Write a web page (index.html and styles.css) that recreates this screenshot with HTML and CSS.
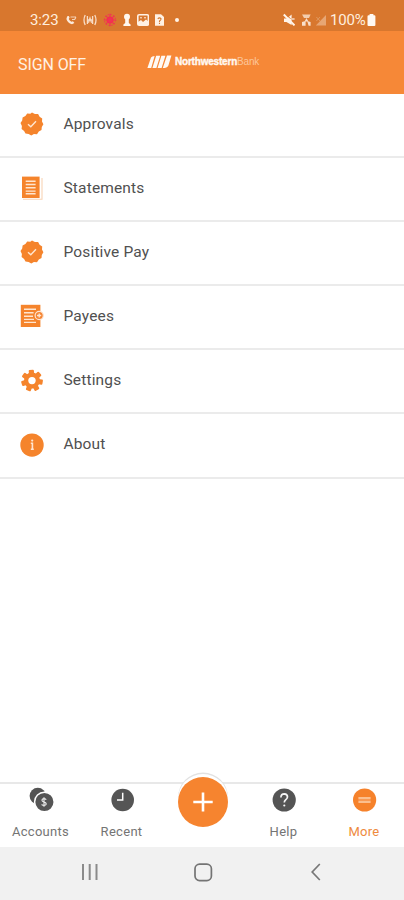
FILE: index.html
```html
<!DOCTYPE html>
<html lang="en">
<head>
<meta charset="utf-8">
<meta name="viewport" content="width=device-width, initial-scale=1">
<title>Northwestern Bank</title>
<link rel="stylesheet" href="styles.css">
</head>
<body>
<div class="app">
  <div class="status">
    <div class="status-left">
      <span class="time">3:23</span>
      <svg width="12" height="14" viewBox="0 0 12 14"><path d="M2.2 3.2 L1.4 6 Q2.4 10 7 11.2 L9.4 10 L8 8.2 L6.4 8.8 Q4.4 7.8 3.8 6 L4.6 4.6 L3.8 3Z" fill="#fbe9db"/><path d="M5.5 4 H11 M7 6.5 H9.6 L11 4.2" stroke="#f5d2b5" stroke-width="1.2" fill="none"/></svg>
      <svg width="14" height="14" viewBox="0 0 14 14"><path d="M2.2 2 Q-.2 7 2.2 12 M4.4 3 V11 M11.8 2 Q14.2 7 11.8 12 M9.6 3 V11 M4.5 7 H9.5 M5.5 9.6 L7 5 L8.5 9.6" stroke="#f8dcc5" stroke-width="1.3" fill="none"/></svg>
      <svg width="14" height="14" viewBox="0 0 14 14"><circle cx="7" cy="7" r="3.6" fill="#fa2850"/><path d="M7 .8 V13.2 M.8 7 H13.2 M2.6 2.6 L11.4 11.4 M2.6 11.4 L11.4 2.6" stroke="#f03553" stroke-width="1.2"/><circle cx="7" cy="7" r="5.6" fill="none" stroke="#f03553" stroke-width="1" stroke-dasharray="1.4 1.5"/></svg>
      <svg width="8" height="14" viewBox="0 0 8 14"><circle cx="4" cy="3.8" r="3" fill="#fff7ef"/><path d="M2.2 5 H5.8 V10 L7.6 11.4 V13 H.4 V11.4 L2.2 10Z" fill="#fff7ef"/></svg>
      <svg width="12" height="14" viewBox="0 0 12 14"><rect x=".8" y="1.8" width="10.6" height="10.4" rx="1.3" fill="none" stroke="#fff1e4" stroke-width="1.6"/><path d="M1 12 V9 L4 7 L6 9 L9 6.6 L11.4 8.6 V12Z" fill="#fff1e4"/><path d="M3 4.8 H5 M7 4.8 H9" stroke="#fff1e4"/></svg>
      <svg width="9" height="14" viewBox="0 0 9 14"><path d="M0 1.3 H6 L9 4 V12.8 H0Z" fill="#fff1e4"/><path d="M2.8 5.8 Q4.5 4 6.1 5.8 Q6 7.2 4.5 8 V9 M4.5 9.8 V11" stroke="#d4782f" stroke-width="1.1" fill="none"/></svg>
      <span class="dot"></span>
    </div>
    <div class="status-right">
      <svg class="mute" width="12" height="14" viewBox="0 0 12 14"><path d="M1 5.4 H4 L8.6 1.4 V12 L3.4 9 H1Z" fill="#fff4ea"/><path d="M9 6 H11.6" stroke="#fff4ea" stroke-width="1.2"/><path d="M.8 1.5 L11.5 12.4" stroke="#fff4ea" stroke-width="2"/><path d="M3 1.2 L7.5 5.8" stroke="#d8772e" stroke-width="1"/></svg>
      <svg class="wifi" width="9" height="14" viewBox="0 0 9 14"><path d="M0 1.6 H8.6 L7 5 H2Z" fill="#f3cdae"/><path d="M4.5 5 L6.4 8.5 H2.6Z M0 12.8 V9 L3.6 8 V12.8Z M5.2 8 L8.6 9 V12.8H6.6Z" fill="#f9dfca"/></svg>
      <svg class="signal" width="12" height="14" viewBox="0 0 12 14"><path d="M11 2 V12.6 H.8Z" fill="#e7a674"/><path d="M1.4 4 L5 8 M5 4 L1.4 8" stroke="#e09860"/></svg>
      <span class="percent">100%</span>
      <svg width="9" height="14" viewBox="0 0 9 14"><path d="M2.6 .9 H6.4 V2.2 H7.4 Q8.4 2.2 8.4 3.2 V12 Q8.4 13 7.4 13 H1.6 Q.5 13 .5 12 V3.2 Q.5 2.2 1.6 2.2 H2.6Z" fill="#fff9f3"/></svg>
    </div>
  </div>

  <header class="header">
    <span class="signoff">SIGN OFF</span>
    <div class="brand">
      <svg width="25" height="14" viewBox="0 0 25 14"><path d="M4 2.6 Q5 1 7.6 1 L4.2 13 H.4Z M9.2 .8 H13.2 L9.4 13 H5.4Z M14.4 .8 H18.4 L14.6 13 H10.6Z M20 .6 H24.4 L21.4 10.4 Q20 13 15.8 13Z" fill="#fffaf5"/></svg>
      <span class="brand-name"><b>Northwestern</b><span class="brand-bank">Bank</span></span>
    </div>
  </header>

  <main class="menu">
    <div class="row">
      <svg class="icon" viewBox="0 0 24 24"><path class="seal" d="M12 .5 L14.9 1.9 L18.1 2 L19.6 4.7 L22.2 6.5 L22 9.6 L23.4 12.3 L21.8 15 L21.5 18.1 L18.8 19.6 L17 22.2 L13.9 22 L11.3 23.5 L8.6 21.9 L5.5 21.6 L4.1 18.9 L1.6 17 L1.9 13.9 L.5 11.1 L2.2 8.5 L2.6 5.4 L5.4 4 L7.2 1.6 L10.3 1.8Z"/><path class="line" d="M8 12.2 L10.8 14.7 L16 9.3"/></svg>
      <span>Approvals</span>
    </div>
    <div class="row">
      <svg class="icon" viewBox="0 0 24 24"><path d="M3 23.2 H22 V2" fill="none" stroke="#f8d4b5" stroke-width="1.1"/><path class="fill" d="M2 .6 H19.6 V22 H2Z"/><path class="line" d="M5.7 5.2 H15.6 M5.7 8.5 H15.6 M5.7 11.8 H15.6 M5.7 15.1 H15.6 M5.7 17.8 H15.6"/></svg>
      <span>Statements</span>
    </div>
    <div class="row">
      <svg class="icon" viewBox="0 0 24 24"><path class="seal" d="M12 .5 L14.9 1.9 L18.1 2 L19.6 4.7 L22.2 6.5 L22 9.6 L23.4 12.3 L21.8 15 L21.5 18.1 L18.8 19.6 L17 22.2 L13.9 22 L11.3 23.5 L8.6 21.9 L5.5 21.6 L4.1 18.9 L1.6 17 L1.9 13.9 L.5 11.1 L2.2 8.5 L2.6 5.4 L5.4 4 L7.2 1.6 L10.3 1.8Z"/><path class="line" d="M8 12.2 L10.8 14.7 L16 9.3"/></svg>
      <span>Positive Pay</span>
    </div>
    <div class="row">
      <svg class="icon" viewBox="0 0 24 24"><path class="fill" d="M.8 .8 H20.4 V23 H.8Z"/><path class="line" d="M4 5.2 H16 M4 8.8 H13.6 M4 12.2 H13 M4 15.4 H14 M4 18.4 H16"/><circle cx="19.2" cy="11.5" r="4.1" fill="#f58432" stroke="#fde5d2" stroke-width="1.2"/><path class="line" d="M17 11.5 H21.2 M19.2 9.4 V13.6"/></svg>
      <span>Payees</span>
    </div>
    <div class="row">
      <svg class="icon" viewBox="0 0 24 24"><g class="fill" transform="rotate(-4 12 12.6)"><circle cx="12" cy="12.6" r="8"/><rect x="9.4" y="1.8" width="5.2" height="6" rx="1"/><rect x="9.4" y="1.8" width="5.2" height="6" rx="1" transform="rotate(51.43 12 12.6)"/><rect x="9.4" y="1.8" width="5.2" height="6" rx="1" transform="rotate(102.86 12 12.6)"/><rect x="9.4" y="1.8" width="5.2" height="6" rx="1" transform="rotate(154.29 12 12.6)"/><rect x="9.4" y="1.8" width="5.2" height="6" rx="1" transform="rotate(205.71 12 12.6)"/><rect x="9.4" y="1.8" width="5.2" height="6" rx="1" transform="rotate(257.14 12 12.6)"/><rect x="9.4" y="1.8" width="5.2" height="6" rx="1" transform="rotate(308.57 12 12.6)"/></g><circle cx="12" cy="12.6" r="3.7" fill="#fff"/></svg>
      <span>Settings</span>
    </div>
    <div class="row">
      <svg class="icon" viewBox="0 0 24 24"><circle class="fill" cx="12" cy="13.1" r="11.7"/><path d="M10.8 11.3 H12.4 V17.2 M10.8 17.2 H13.8" fill="none" stroke="#ffe6d2" stroke-width="1.6"/><circle cx="12.2" cy="8.6" r="1.1" fill="#ffe6d2"/></svg>
      <span>About</span>
    </div>
  </main>

  <nav class="tabs">
    <div class="tab">
      <svg width="26" height="26" viewBox="0 0 26 26"><circle cx="9.8" cy="9" r="8.2" fill="#545454"/><circle cx="16.4" cy="15" r="9.8" fill="#555" stroke="#fff" stroke-width="1.5"/><path d="M18.3 12.7 Q16 10.8 14.2 12.4 Q13.4 14.4 16 15 Q18.8 15.8 18 17.6 Q16 19.4 13.6 17.5 M16 10.2 V19.8" stroke="#eee" stroke-width="1.1" fill="none"/></svg>
      <span>Accounts</span>
    </div>
    <div class="tab">
      <svg width="26" height="26" viewBox="0 0 26 26"><circle cx="13.7" cy="13" r="11.3" fill="#555"/><path d="M13.7 5.7 V13.1 H8" stroke="#fff" stroke-width="1.5" fill="none"/></svg>
      <span>Recent</span>
    </div>
    <div class="tab">
      <div class="add"><svg width="50" height="50" viewBox="0 0 50 50"><path d="M25 15.5 V34.5 M15.3 25 H34.7" stroke="#fff" stroke-width="2.6"/></svg></div>
    </div>
    <div class="tab">
      <svg width="26" height="26" viewBox="0 0 26 26"><circle cx="13.2" cy="13" r="11.6" fill="#545454"/><path d="M9.9 10.4 Q10 6.8 13.3 6.8 Q16.6 7 16.5 10 Q16.3 11.5 14.6 12.9 Q13.3 14 13.3 15.6" fill="none" stroke="#f5f5f5" stroke-width="1.7"/><circle cx="13.3" cy="18.5" r="1.1" fill="#f5f5f5"/></svg>
      <span>Help</span>
    </div>
    <div class="tab active">
      <svg width="26" height="26" viewBox="0 0 26 26"><circle cx="13.6" cy="13" r="11.6" fill="#f6822b"/><path d="M7.4 11 H19.6 M7.4 15 H19.6" stroke="#fdd3b0" stroke-width="1.7"/><path d="M7.4 13 H19.6" stroke="#f9a566" stroke-width="1.4"/></svg>
      <span>More</span>
    </div>
  </nav>

  <div class="system">
    <svg width="18" height="20" viewBox="0 0 18 20"><path d="M2 2 V18 M8.7 2 V18 M15.5 2 V18" stroke="#8b8b8b" stroke-width="2"/></svg>
    <svg width="20" height="20" viewBox="0 0 20 20"><rect x="1" y="2.2" width="16.4" height="16.4" rx="4.6" fill="none" stroke="#747474" stroke-width="1.7"/></svg>
    <svg width="14" height="20" viewBox="0 0 14 20"><path d="M10.8 2 L3.2 10 L10.8 18" fill="none" stroke="#777" stroke-width="1.7"/></svg>
  </div>
</div>
</body>
</html>
```
FILE: styles.css
```css
* {
  box-sizing: border-box;
}

body {
  margin: 0;
  background: #fff;
  font-family: Roboto, "Liberation Sans", sans-serif;
}

svg {
  display: block;
  flex: none;
}

.app {
  display: flex;
  flex-direction: column;
  width: 404px;
  height: 900px;
  overflow: hidden;
}

.status {
  display: flex;
  justify-content: space-between;
  height: 31px;
  padding: 9px 28px 0 30px;
  background: #d8772e;
  color: #ffeede;
}

.status-left,
.status-right {
  display: flex;
  align-items: center;
  height: 22px;
}

.status-left {
  gap: 6px;
}

.time {
  width: 29px;
  font-size: 15px;
  letter-spacing: -0.1px;
  white-space: nowrap;
}

.dot {
  width: 4px;
  height: 4px;
  margin-left: 5px;
  border-radius: 50%;
  background: #fff3e8;
}

.wifi {
  margin-left: 7px;
}

.signal {
  margin-left: 4px;
}

.percent {
  width: 37px;
  margin-left: 3px;
  font-size: 15px;
  letter-spacing: -0.2px;
}

.header {
  display: flex;
  height: 63px;
  padding-left: 18px;
  background: #f68837;
  color: #fff1e3;
}

.signoff {
  width: 129px;
  padding-top: 24px;
  font-size: 16px;
  line-height: 20px;
  letter-spacing: -0.1px;
}

.brand {
  display: flex;
  gap: 3px;
  height: 14px;
  margin-top: 24px;
}

.brand-name {
  color: #fff8f1;
  font-family: "Liberation Sans", sans-serif;
  font-size: 10px;
  line-height: 14px;
  letter-spacing: -0.2px;
  white-space: nowrap;
}

.brand-name b {
  -webkit-text-stroke: 0.4px #fff8f1;
}

.brand-bank {
  color: #fcc69b;
}

.menu {
  flex: 1;
}

.row {
  display: flex;
  align-items: center;
  gap: 19.5px;
  height: 64.1px;
  padding: 0 20px 3px;
  border-bottom: 2px solid #ebebeb;
  color: #505050;
  font-size: 15.5px;
  letter-spacing: 0.15px;
}

.icon {
  width: 24px;
  height: 24px;
  overflow: visible;
}

.seal,
.fill {
  fill: #f5842c;
}

.line {
  fill: none;
  stroke: #ffe6d0;
  stroke-width: 1.4;
}

.tabs {
  display: grid;
  grid-template-columns: repeat(5, 81px);
  height: 65px;
  border-top: 2px solid #e8e8e8;
}

.tab {
  display: flex;
  flex-direction: column;
  align-items: center;
  padding-top: 3px;
  color: #747474;
  font-size: 13px;
  line-height: 16px;
  letter-spacing: 0.3px;
}

.tab span {
  margin-top: 11px;
}

.active {
  padding-right: 1px;
  color: #ee8a3d;
}

.add {
  width: 50px;
  height: 50px;
  margin-top: -10px;
  border-radius: 50%;
  background: #f6842f;
  box-shadow: 0 -3px 0 0 #fff, 0 -4.5px 0 0 #e2e2e2;
}

.system {
  display: flex;
  align-items: center;
  justify-content: space-between;
  height: 53px;
  padding: 0 81px 3px;
  background: #f1f1f1;
}
```
